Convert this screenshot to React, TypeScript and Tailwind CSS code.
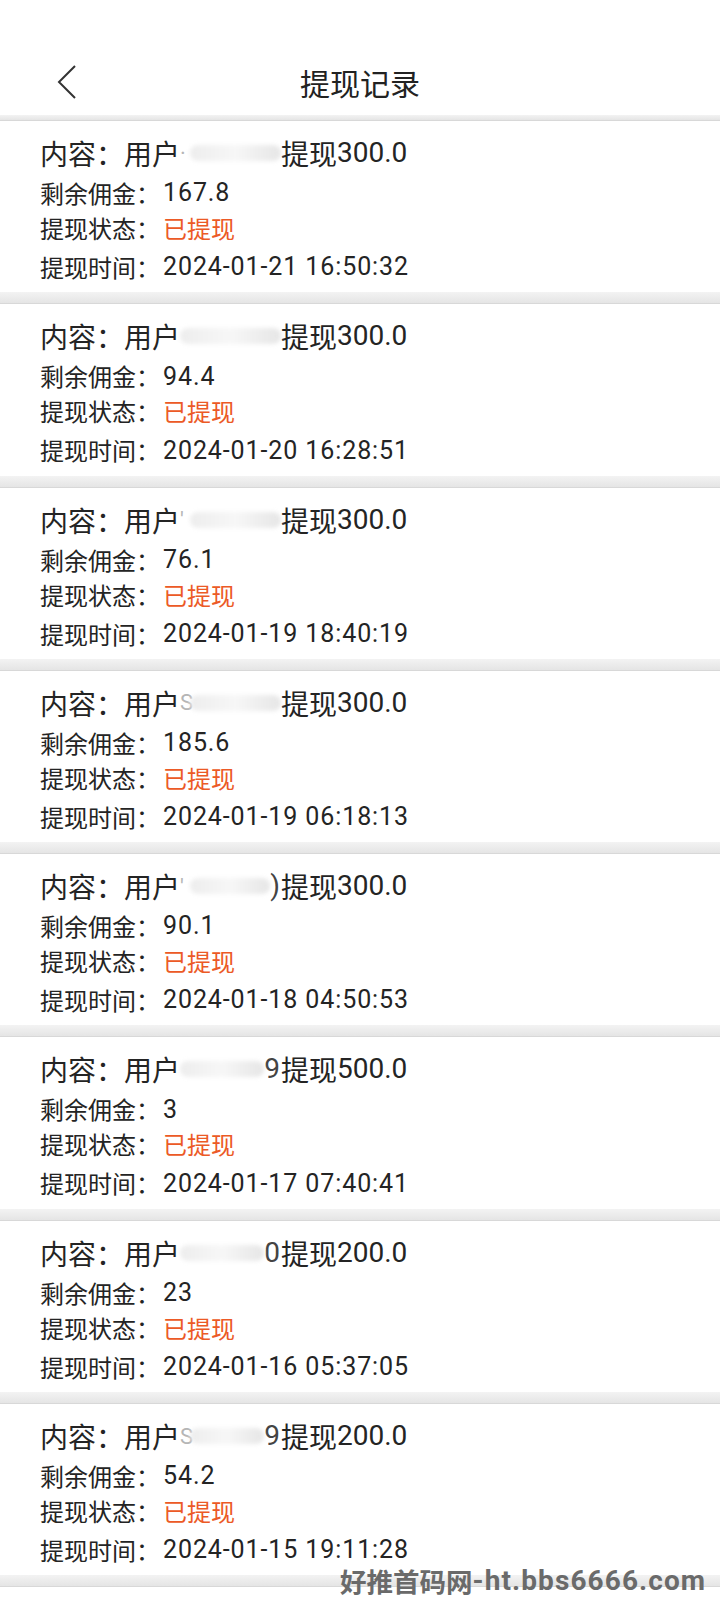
const records = [
  { pre: "·", tail: "", amount: "300.0", left: "167.8", time: "2024-01-21 16:50:32" },
  { pre: "", tail: "", amount: "300.0", left: "94.4", time: "2024-01-20 16:28:51" },
  { pre: "'", tail: "", amount: "300.0", left: "76.1", time: "2024-01-19 18:40:19" },
  { pre: "S", tail: "", amount: "300.0", left: "185.6", time: "2024-01-19 06:18:13" },
  { pre: "'", tail: ")", amount: "300.0", left: "90.1", time: "2024-01-18 04:50:53" },
  { pre: "", tail: "9", amount: "500.0", left: "3", time: "2024-01-17 07:40:41" },
  { pre: "", tail: "0", amount: "200.0", left: "23", time: "2024-01-16 05:37:05" },
  { pre: "S", tail: "9", amount: "200.0", left: "54.2", time: "2024-01-15 19:11:28" },
];

const latin = { fontFamily: 'Roboto, "Noto Sans CJK SC", sans-serif' };

function Separator({ h }: { h: string }) {
  return <div className={`${h} bg-gradient-to-b from-[#f3f3f3] to-[#e5e5e5] border-b border-[#d8d8d8]`} />;
}

function Card({ r }: { r: (typeof records)[number] }) {
  return (
    <div className="bg-white pl-[40px] pt-[10px] pb-[3.3px] text-[#242424]">
      <div className="h-[44px] flex items-center text-[28px] whitespace-nowrap">
        <span className="w-[140px]">内容：用户</span>
        <span className="w-[101px] h-[44px] flex items-center">
          {r.pre && <span className="text-[#b5b5b5] text-[22px] w-[10px]" style={latin}>{r.pre}</span>}
          <span className="flex-1 h-[16px] rounded-full bg-gradient-to-r from-[#ededed] via-[#f7f7f7] to-[#e6e6e6] blur-[2px]" />
          {r.tail && <span className="text-[#444] pr-[1px]" style={latin}>{r.tail}</span>}
        </span>
        <span>提现</span>
        <span style={latin}>{r.amount}</span>
      </div>
      <div className="h-[36px] flex items-center text-[24px]">
        <span className="w-[123px]">剩余佣金：</span>
        <span className="text-[25px] tracking-[0.9px]" style={latin}>{r.left}</span>
      </div>
      <div className="h-[34px] flex items-center text-[24px]">
        <span className="w-[123px]">提现状态：</span>
        <span className="text-[#ec5a26]">已提现</span>
      </div>
      <div className="h-[44px] flex items-center text-[24px]">
        <span className="w-[123px]">提现时间：</span>
        <span className="text-[25px] tracking-[0.9px]" style={latin}>{r.time}</span>
      </div>
    </div>
  );
}

export default function App() {
  return (
    <div
      className="relative w-[720px] h-[1600px] overflow-hidden bg-white"
      style={{ fontFamily: '"Noto Sans CJK SC", "Noto Sans", sans-serif' }}
    >
      <div className="h-[115px] pt-[49px]">
        <div className="relative h-[66px] flex items-center justify-center">
          <svg className="absolute left-[56px] top-[15px]" width="22" height="36" viewBox="0 0 22 36" fill="none">
            <path d="M19 2 L3 18 L19 34" stroke="#333" strokeWidth="2" />
          </svg>
          <span className="text-[30px] text-[#222]">提现记录</span>
        </div>
      </div>
      <Separator h="h-[6px]" />
      {records.map((r, i) => (
        <div key={i}>
          <Card r={r} />
          <Separator h="h-[12px]" />
        </div>
      ))}
      <div className="absolute left-[340px] top-[1560px] flex items-center font-bold text-[#6a6a6a] whitespace-nowrap">
        <span className="text-[26.5px]">好推首码网</span>
        <span className="text-[28px] tracking-[1.1px]" style={latin}>-ht.bbs6666.com</span>
      </div>
    </div>
  );
}
